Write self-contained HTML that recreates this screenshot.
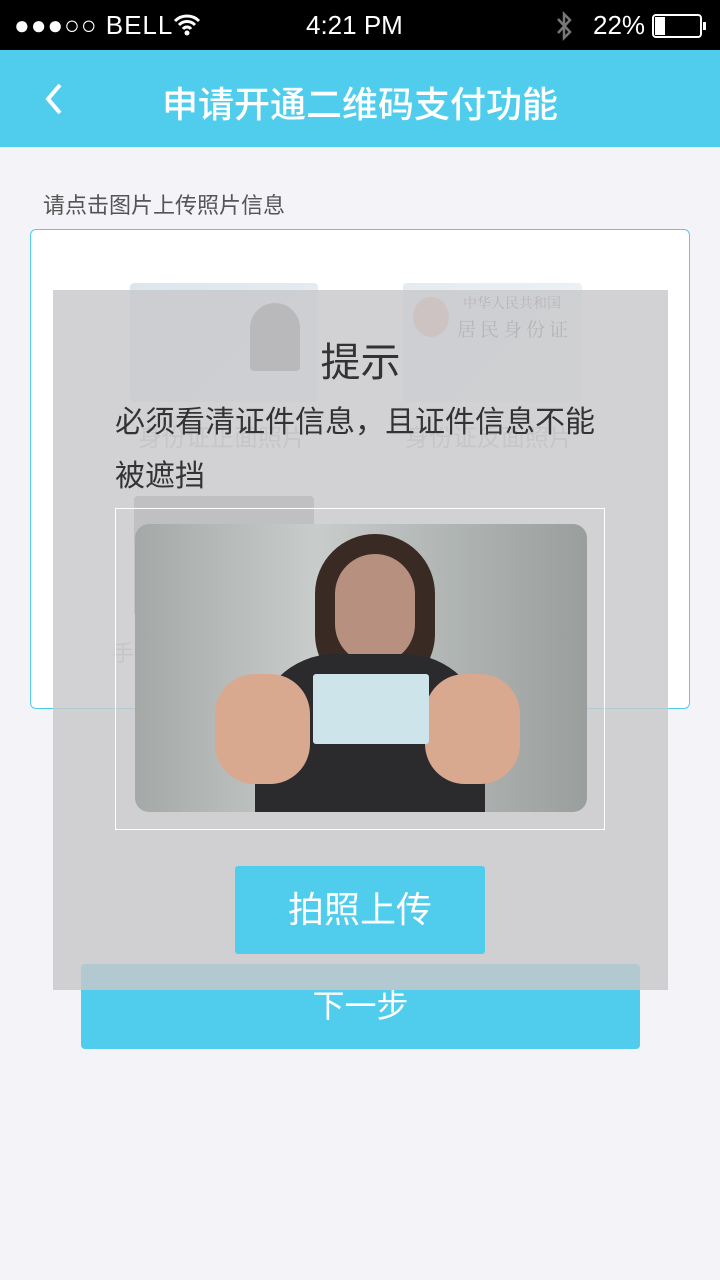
<!DOCTYPE html>
<html><head><meta charset="utf-8"><style>
*{margin:0;padding:0;box-sizing:border-box}
body{width:720px;height:1280px;background:#f3f3f8;position:relative;overflow:hidden;font-family:"Liberation Sans","Noto Sans CJK SC",sans-serif}
.abs{position:absolute}
</style></head><body>
<div class="abs" style="left:0;top:0;width:720px;height:50px;background:#000;color:#fff;font-size:26px">
 <div class="abs" style="left:14px;top:10px;letter-spacing:1px">●●●○○ BELL</div>
 <svg class="abs" style="left:172px;top:12px" width="30" height="26" viewBox="0 0 30 26"><path d="M3 9a17 17 0 0 1 24 0M7 13a11 11 0 0 1 16 0M11 17a5 5 0 0 1 8 0" stroke="#fff" stroke-width="3" fill="none"/><circle cx="15" cy="21" r="2.5" fill="#fff"/></svg>
 <div class="abs" style="left:306px;top:10px">4:21 PM</div>
 <svg class="abs" style="left:554px;top:10px" width="20" height="32" viewBox="0 0 20 32"><path d="M4 9l12 13-6 6V4l6 6L4 23" stroke="#777" stroke-width="2.5" fill="none"/></svg>
 <div class="abs" style="left:593px;top:10px">22%</div>
 <div class="abs" style="left:652px;top:14px;width:50px;height:24px;border:2px solid #fff;border-radius:4px"><div style="width:10px;height:18px;margin:1px;background:#fff"></div></div>
 <div class="abs" style="left:703px;top:22px;width:3px;height:8px;background:#fff"></div>
</div>
<div class="abs" style="left:0;top:50px;width:720px;height:97px;background:#50cdec">
 <svg class="abs" style="left:42px;top:32px" width="24" height="34" viewBox="0 0 24 34"><path d="M18 3L6 17l12 14" stroke="#fff" stroke-width="4" fill="none"/></svg>
 <div class="abs" style="left:0;top:26px;width:720px;text-align:center;color:#fff;font-size:36px;font-weight:500">申请开通二维码支付功能</div>
</div>
<div class="abs" style="left:43px;top:188px;font-size:22px;color:#555">请点击图片上传照片信息</div>
<div class="abs" style="left:30px;top:229px;width:660px;height:480px;background:#fff;border:1px solid #50cdec;border-radius:6px"></div>
<div class="abs" style="left:130px;top:283px;width:188px;height:119px;background:linear-gradient(135deg,#dde6ee,#e8eef3);border-radius:4px"><div class="abs" style="left:120px;top:20px;width:50px;height:68px;background:#777;border-radius:25px 25px 4px 4px"></div></div>
<div class="abs" style="left:403px;top:283px;width:179px;height:119px;background:linear-gradient(135deg,#e5ecf0,#eef2f5);border-radius:4px;color:#666;font-family:'Liberation Serif','Noto Serif CJK SC',serif"><div class="abs" style="left:10px;top:14px;width:36px;height:40px;border-radius:50%;background:#e8a9a0"></div><div class="abs" style="left:60px;top:10px;font-size:14px">中华人民共和国</div><div class="abs" style="left:54px;top:32px;font-size:19px;letter-spacing:4px">居民身份证</div></div>
<div class="abs" style="left:138px;top:418px;font-size:24px;color:#bbb">身份证正面照片</div>
<div class="abs" style="left:405px;top:418px;font-size:24px;color:#bbb">身份证反面照片</div>
<div class="abs" style="left:134px;top:496px;width:180px;height:120px;background:#999;border-radius:4px"></div>
<div class="abs" style="left:112px;top:636px;font-size:22px;color:#bbb">手</div>
<div class="abs" style="left:81px;top:964px;width:559px;height:85px;background:#50cdec;border-radius:4px;color:#fff;font-size:32px;text-align:center;line-height:85px">下一步</div>
<div class="abs" style="left:53px;top:290px;width:615px;height:700px;background:rgba(200,200,202,0.82)"></div>
<div class="abs" style="left:53px;top:290px;width:615px;height:700px">
 <div class="abs" style="left:0;top:40px;width:615px;text-align:center;font-size:40px;color:#333">提示</div>
 <div class="abs" style="left:62px;top:106px;width:500px;font-size:30px;line-height:54px;color:#333">必须看清证件信息，且证件信息不能被遮挡</div>
 <div class="abs" style="left:62px;top:218px;width:490px;height:322px;border:1px solid #fff"></div>
 <div class="abs" style="left:82px;top:234px;width:452px;height:288px;border-radius:14px;overflow:hidden;background:linear-gradient(90deg,#a4a9a7,#c8ccca 40%,#b0b5b3 70%,#9a9e9c)">
  <div class="abs" style="left:180px;top:10px;width:120px;height:160px;border-radius:60px;background:#3a2a24"></div>
  <div class="abs" style="left:200px;top:30px;width:80px;height:110px;border-radius:40px;background:#b89080"></div>
  <div class="abs" style="left:120px;top:130px;width:230px;height:170px;border-radius:80px 80px 0 0;background:#2b2b2e"></div>
  <div class="abs" style="left:80px;top:150px;width:95px;height:110px;border-radius:40px;background:#d8a88f"></div>
  <div class="abs" style="left:290px;top:150px;width:95px;height:110px;border-radius:40px;background:#d8a88f"></div>
  <div class="abs" style="left:178px;top:150px;width:116px;height:70px;background:#cde4ea;border-radius:3px"></div>
 </div>
 <div class="abs" style="left:182px;top:576px;width:250px;height:88px;background:#50cdec;border-radius:3px;color:#fff;font-size:36px;text-align:center;line-height:88px">拍照上传</div>
</div>
</body></html>
